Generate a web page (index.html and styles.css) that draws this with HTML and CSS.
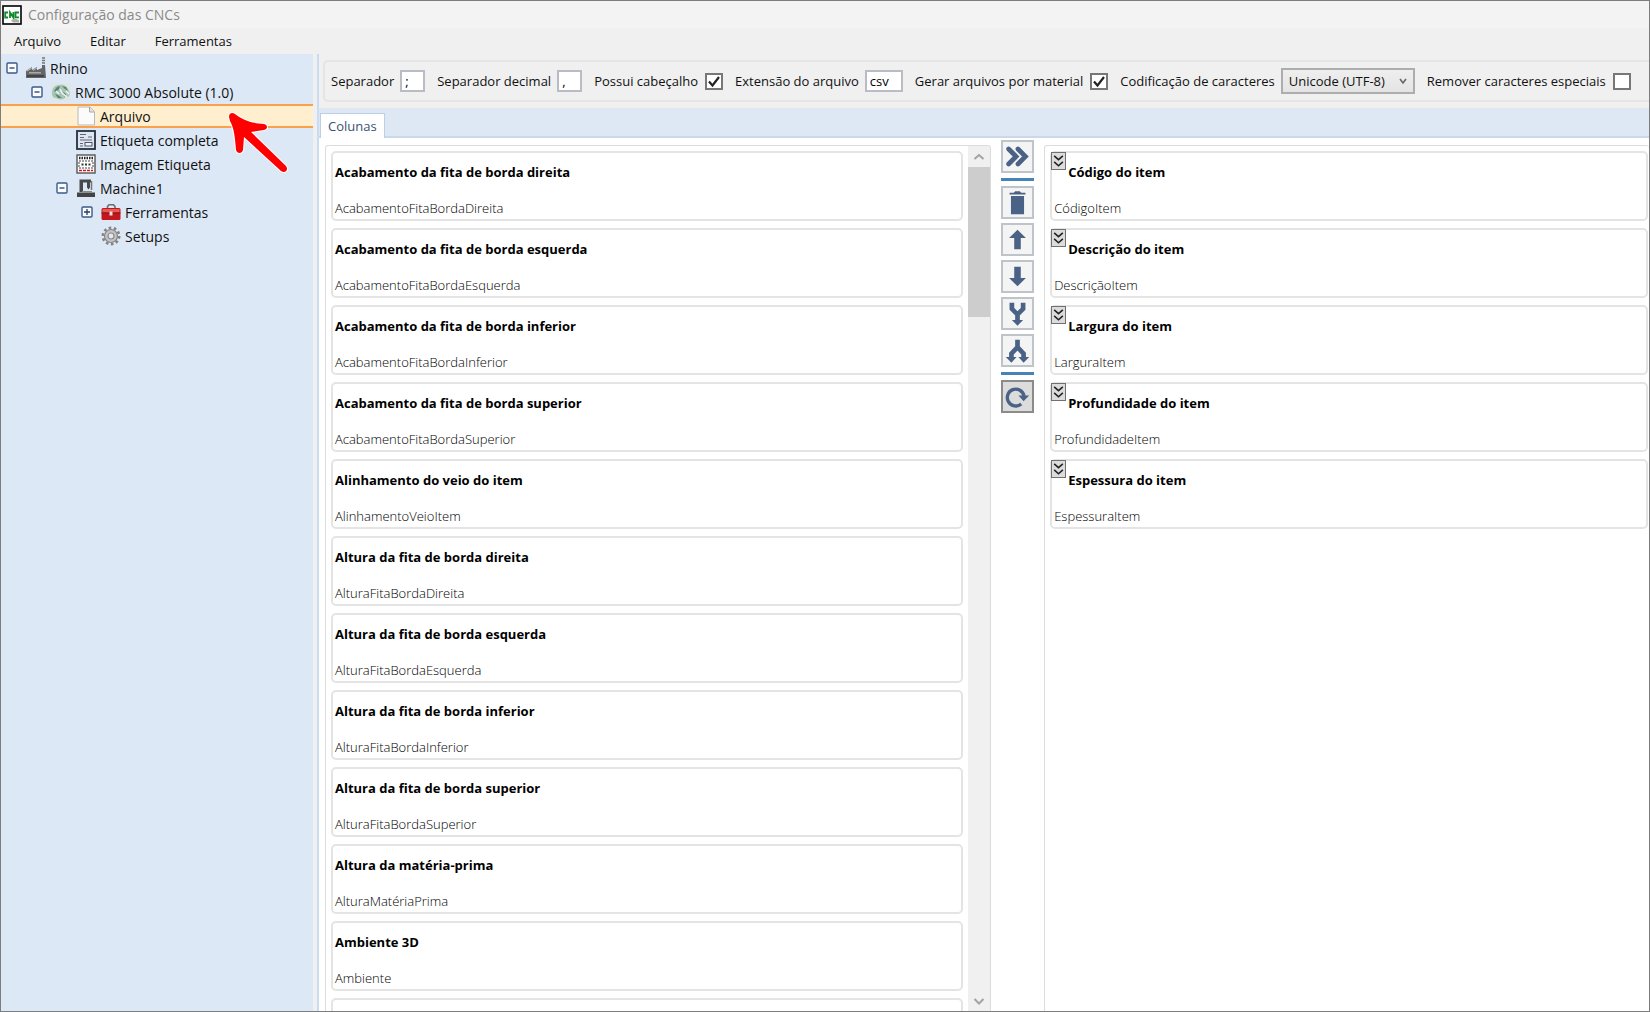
FILE: index.html
```html
<!DOCTYPE html>
<html lang="pt-BR">
<head>
  <meta charset="UTF-8">
  <meta name="viewport" content="width=device-width, initial-scale=1.0">
  <title>Configuração das CNCs</title>
  <link rel="stylesheet" href="styles.css">
</head>
<body>
  <svg class="defs" width="0" height="0" aria-hidden="true">
    <symbol id="minus" viewBox="0 0 12 12"><rect x="1" y="1" width="10" height="10" rx="1" fill="#f8fbff" stroke="#3d5a88" stroke-width="1.4"/><path d="M3.5 6h5" stroke="#253e69" stroke-width="1.3"/></symbol>
    <symbol id="plus" viewBox="0 0 12 12"><rect x="1" y="1" width="10" height="10" rx="1" fill="#f8fbff" stroke="#3d5a88" stroke-width="1.4"/><path d="M3 6h6M6 3v6" stroke="#253e69" stroke-width="1.3"/></symbol>
    <symbol id="expand" viewBox="0 0 15 18"><path d="M2.500 3l5 4.500 5-4.500M2.500 10l5 4.500 5-4.500" fill="none" stroke="#222" stroke-width="1.800"/></symbol>
  </svg>

  <div class="window">
    <header class="titlebar">
      <svg width="20" height="20" viewBox="0 0 20 20">
        <rect x="1" y="1" width="18" height="18" fill="#fff" stroke="#000" stroke-width="1.6"/>
        <path d="M6 7.500H3.200v5H6M8 13V7.500l3.400 5V7M17 7.500h-3.500v4.800H17" fill="none" stroke="#118a2c" stroke-width="1.800"/>
        <path d="M9 15.500c1-1.500 3-1 4-2l4 1.500v2.500h-6z" fill="#a9b3ac"/>
      </svg>
      <h1>Configuração das CNCs</h1>
    </header>

    <nav class="menubar">
      <button type="button">Arquivo</button>
      <button type="button">Editar</button>
      <button type="button">Ferramentas</button>
    </nav>

    <div class="body">
      <aside class="tree">
        <ul>
          <li class="node">
            <button class="toggle" type="button" aria-label="Recolher Rhino"><svg width="12" height="12"><use href="#minus"/></svg></button>
            <svg width="20" height="22" viewBox="0 0 20 22">
              <path d="M0 21v-7l6-4v3l5-3v3l5-2V8h3l1 13z" fill="#666"/>
              <path d="M16 1h3M16 3.500h3M16 6h3" stroke="#777" stroke-width="1.500"/>
              <path d="M1 14l5-3M7 13.500l4-2.500" stroke="#bbb" stroke-width="1"/>
              <path d="M3 15h12v1.500H3z" fill="#aaa"/>
              <path d="M1 19h17" stroke="#444" stroke-width="2"/>
            </svg>
            <span>Rhino</span>
          </li>
          <li class="node depth-1">
            <button class="toggle" type="button" aria-label="Recolher RMC 3000 Absolute"><svg width="12" height="12"><use href="#minus"/></svg></button>
            <svg width="20" height="18" viewBox="0 0 20 18">
              <path d="M0 0h20v18H0z" fill="#dfe6e4"/>
              <path d="M1 10c0-5 3-8 7-8 5-1 9 2 10 6 2 3 0 7-3 6-2 3-7 3-10 1-3 0-4-2-4-5z" fill="#a9c3b7"/>
              <path d="M3 8l3-4 3-1-1 3-3 3zM11 3l4 1 2 4-3-2zM4 11l3 1 4 3-4 0zM12 9l3 2-1 3z" fill="#4f8871"/>
              <path d="M9 6l2 4 5 4M5 8l3 3M15 8l3 3" fill="none" stroke="#f1f7f4" stroke-width="1.400"/>
            </svg>
            <span>RMC 3000 Absolute (1.0)</span>
          </li>
          <li class="node depth-2 selected">
            <span class="toggle"></span>
            <svg width="20" height="20" viewBox="0 0 20 20">
              <path d="M2 1h12l4.500 4.500V19H2z" fill="#fbfbfb" stroke="#b9b9b9"/>
              <path d="M13.500 1v5h5" fill="#e3e3e3" stroke="#a8a8a8"/>
            </svg>
            <span>Arquivo</span>
          </li>
          <li class="node depth-2">
            <span class="toggle"></span>
            <svg width="20" height="20" viewBox="0 0 20 20">
              <rect x="1" y="1" width="18" height="18" fill="#dce5f1" stroke="#26303c" stroke-width="1.800"/>
              <path d="M4 4.500h6M4 7.500h4M12 7h4M4 10h12M4 13.500h3M4 16h3" stroke="#667" stroke-width="1.200"/>
              <rect x="9" y="12.500" width="7" height="3.500" fill="#eef3fa" stroke="#556"/>
            </svg>
            <span>Etiqueta completa</span>
          </li>
          <li class="node depth-2">
            <span class="toggle"></span>
            <svg width="20" height="20" viewBox="0 0 20 20">
              <rect x="1" y="1" width="18" height="18" fill="#fff" stroke="#555" stroke-width="1.400"/>
              <path d="M3 4h14" stroke="#222" stroke-width="2.400" stroke-dasharray="1.500 1"/>
              <rect x="3" y="7" width="14" height="7" fill="#fff" stroke="#444" stroke-dasharray="2 1"/>
              <path d="M5.500 10.500h9" stroke="#333" stroke-width="2" stroke-dasharray="2 1.500"/>
              <path d="M3 16.500h14" stroke="#d8151c" stroke-width="1.600" stroke-dasharray="3 1"/>
            </svg>
            <span>Imagem Etiqueta</span>
          </li>
          <li class="node depth-2">
            <button class="toggle" type="button" aria-label="Recolher Machine1"><svg width="12" height="12"><use href="#minus"/></svg></button>
            <svg width="20" height="20" viewBox="0 0 20 20">
              <path d="M3.500 1.500H15v3h-1v5l-1.500 2L11 9.500v-5H7V14H3.500z" fill="#484848"/>
              <path d="M1 14.500h18v4.500H1z" fill="#444"/>
              <path d="M6 13h10v1.500H6z" fill="#8b8b8b"/>
              <path d="M15.500 3v9" stroke="#777" stroke-width="1.500"/>
            </svg>
            <span>Machine1</span>
          </li>
          <li class="node depth-3">
            <button class="toggle" type="button" aria-label="Expandir Ferramentas"><svg width="12" height="12"><use href="#plus"/></svg></button>
            <svg width="20" height="18" viewBox="0 0 20 18">
              <path d="M6.500 5.500V3.500L8 1.800h4.500l1.500 1.700v2" fill="none" stroke="#6d6d6d" stroke-width="1.600"/>
              <rect x="0.500" y="5" width="19" height="12" rx="1.500" fill="#c2181d"/>
              <path d="M1.500 6h17v3.500h-17z" fill="#e35a57"/>
              <path d="M0.500 10h19" stroke="#8c0f12"/>
              <path d="M8.500 8.500h3v4h-3z" fill="#f1dcdc"/>
            </svg>
            <span>Ferramentas</span>
          </li>
          <li class="node depth-3">
            <span class="toggle"></span>
            <svg width="20" height="20" viewBox="0 0 20 20">
              <circle cx="10" cy="10" r="8.200" fill="none" stroke="#838383" stroke-width="2.600" stroke-dasharray="2.600 2.550"/>
              <circle cx="10" cy="10" r="6.500" fill="#c3c3c3" stroke="#868686" stroke-width="1.200"/>
              <circle cx="10" cy="10" r="3" fill="#dfe8f5" stroke="#8b8b8b" stroke-width="1.200"/>
            </svg>
            <span>Setups</span>
          </li>
        </ul>

        <svg class="pointer" width="64" height="64" viewBox="0 0 64 64" aria-hidden="true">
          <path d="M5 8c0-4 3-5 6-3 8 6 15 9 29 10 4 1 4 5 0 6l-13 2 35 34c3 4-1 8-5 5L20 28l-1 13c-1 4-6 4-7 0-1-13-2-22-6-29z" fill="#fe0000" stroke="#fff" stroke-width="2" paint-order="stroke"/>
        </svg>
      </aside>

      <main class="content">
        <form class="options">
          <label for="sep">Separador</label>
          <input class="field" type="text" id="sep" value=";">
          <label for="dec">Separador decimal</label>
          <input class="field" type="text" id="dec" value=",">
          <label for="header">Possui cabeçalho</label>
          <input class="check" type="checkbox" id="header" checked>
          <label for="ext">Extensão do arquivo</label>
          <input class="field wide" type="text" id="ext" value="csv">
          <label for="material">Gerar arquivos por material</label>
          <input class="check" type="checkbox" id="material" checked>
          <label for="encoding">Codificação de caracteres</label>
          <select id="encoding"><option>Unicode (UTF-8)</option></select>
          <label for="special">Remover caracteres especiais</label>
          <input class="check" type="checkbox" id="special">
        </form>

        <div class="tabs">
          <button class="tab" type="button">Colunas</button>
        </div>

        <div class="columns">
          <section class="panel available">
            <ul class="cards" id="available"></ul>
            <div class="scrollbar">
              <svg width="22" height="21" viewBox="0 0 22 21"><path d="M6.500 13l4.500-4 4.500 4" fill="none" stroke="#a3a3a3" stroke-width="2"/></svg>
              <div class="thumb"></div>
              <svg width="22" height="21" viewBox="0 0 22 21"><path d="M6.500 9l4.500 4.500L15.500 9" fill="none" stroke="#a3a3a3" stroke-width="2"/></svg>
            </div>
          </section>

          <div class="actions">
            <button type="button" aria-label="Adicionar"><svg viewBox="0 0 31 31"><path d="M6 7.500l8 8-8 8M16 7.500l8 8-8 8" fill="none" stroke="#4a6285" stroke-width="5" stroke-linecap="round"/></svg></button>
            <hr>
            <button type="button" aria-label="Excluir"><svg viewBox="0 0 31 31"><path d="M7 5h4.500l1.500-1.500h5L19.500 5H24v2H7zM8.500 8.500h14V28h-14z" fill="#4a6285"/></svg></button>
            <button type="button" aria-label="Mover para cima"><svg viewBox="0 0 31 31"><path d="M15.500 5l9 9h-5.500v12h-7V14H6.500z" fill="#4a6285"/></svg></button>
            <button type="button" aria-label="Mover para baixo"><svg viewBox="0 0 31 31"><path d="M15.500 26l9-9h-5.500V5h-7v12H6.500z" fill="#4a6285"/></svg></button>
            <button type="button" aria-label="Unir"><svg viewBox="0 0 31 31"><path d="M9.500 4v6.500l6 6 6-6V4M15.500 15v8" fill="none" stroke="#4a6285" stroke-width="5"/><path d="M9.500 22.500h12l-6 6z" fill="#4a6285"/></svg></button>
            <button type="button" aria-label="Separar"><svg viewBox="0 0 31 31"><path d="M15.500 4v8M9 25v-6l6.500-7 6.500 7v6" fill="none" stroke="#4a6285" stroke-width="5"/><path d="M3 22.500h11.500L9 28.500zM16.500 22.500H28l-6 6z" fill="#4a6285"/></svg></button>
            <hr>
            <button class="reset" type="button" aria-label="Restaurar"><svg viewBox="0 0 31 31"><path d="M19.500 23.500A9 9 0 1 1 22.500 15" fill="none" stroke="#4a6285" stroke-width="3.600"/><path d="M16.500 14.500H28l-6 6z" fill="#4a6285"/></svg></button>
          </div>

          <section class="panel chosen">
            <ul class="cards" id="chosen"></ul>
          </section>
        </div>
      </main>
    </div>
  </div>

  <script>
    const available = [
      ["Acabamento da fita de borda direita", "AcabamentoFitaBordaDireita"],
      ["Acabamento da fita de borda esquerda", "AcabamentoFitaBordaEsquerda"],
      ["Acabamento da fita de borda inferior", "AcabamentoFitaBordaInferior"],
      ["Acabamento da fita de borda superior", "AcabamentoFitaBordaSuperior"],
      ["Alinhamento do veio do item", "AlinhamentoVeioItem"],
      ["Altura da fita de borda direita", "AlturaFitaBordaDireita"],
      ["Altura da fita de borda esquerda", "AlturaFitaBordaEsquerda"],
      ["Altura da fita de borda inferior", "AlturaFitaBordaInferior"],
      ["Altura da fita de borda superior", "AlturaFitaBordaSuperior"],
      ["Altura da matéria-prima", "AlturaMatériaPrima"],
      ["Ambiente 3D", "Ambiente"],
      ["", ""]
    ];
    const chosen = [
      ["Código do item", "CódigoItem"],
      ["Descrição do item", "DescriçãoItem"],
      ["Largura do item", "LarguraItem"],
      ["Profundidade do item", "ProfundidadeItem"],
      ["Espessura do item", "EspessuraItem"]
    ];
    const expandBtn = '<button class="expand" type="button" aria-label="Detalhes"><svg width="15" height="18"><use href="#expand"/></svg></button>';

    function fill(id, items, button) {
      document.getElementById(id).innerHTML = items.map(([title, field]) =>
        `<li class="card">${button}<h2>${title}</h2><p>${field}</p></li>`
      ).join('');
    }
    fill('available', available, '');
    fill('chosen', chosen, expandBtn);
  </script>
</body>
</html>
```
FILE: styles.css
```css
* { box-sizing: border-box; }
body { margin: 0; font-family: "Open Sans", "Noto Sans", sans-serif; font-size: 13px; color: #111; }
ul { list-style: none; margin: 0; padding: 0; }
button { padding: 0; border: none; background: none; font: inherit; color: inherit; }
.defs { position: absolute; }

.window { height: 100vh; display: flex; flex-direction: column; border: 1px solid #7d7d7d; background: #f0f0f0; overflow: hidden; }
.titlebar { display: flex; align-items: center; gap: 6px; height: 27px; padding: 0 1px; background: #f3f3f3; flex: none; }
.titlebar h1 { margin: 0; font-size: 14px; font-weight: 400; color: #8a8a8a; }
.menubar { display: flex; gap: 29px; height: 26px; padding: 0 13px; flex: none; }

.body { flex: 1; display: flex; min-height: 0; }

/* árvore */
.tree { position: relative; width: 312px; flex: none; padding-top: 2px; background: #dde8f6; font-size: 14px; }
.node { display: flex; align-items: center; height: 24px; padding-left: 5px; white-space: nowrap; }
.node > svg { flex: none; margin-right: 4px; }
.depth-1 { padding-left: 30px; }
.depth-2 { padding-left: 55px; }
.depth-3 { padding-left: 80px; }
.selected { background: #ffefcf; border-top: 2px solid #fba04c; border-bottom: 2px solid #fba04c; }
.toggle { width: 12px; height: 12px; margin-right: 8px; flex: none; display: block; }
.toggle svg { display: block; }
.pointer { position: absolute; left: 223px; top: 55px; }

/* opções do arquivo */
.content { flex: 1; min-width: 0; margin-left: 4px; display: flex; flex-direction: column; border-left: 2px solid #c9dcf3; }
.options { display: flex; align-items: center; height: 42px; margin: 6px 0 6px 4px; padding-left: 6px; border: 2px solid #e5e5e5; border-right: none; border-radius: 5px 0 0 5px; white-space: nowrap; flex: none; }
.options label { margin-right: 6px; }
.field { width: 25px; height: 22px; margin: 0 12px 0 0; padding: 0 3px; border: 2px solid #b9bcc4; background: #fff; font: inherit; }
.wide { width: 38px; }
.check { appearance: none; width: 18px; height: 17px; margin: 0 12px 0 1px; border: 2px solid #777; background: #fff; flex: none; }
.check:checked { background: #fff url("data:image/svg+xml,%3Csvg xmlns='http://www.w3.org/2000/svg' viewBox='0 0 14 13'%3E%3Cpath d='M2 6.500l3.500 4L12 2' fill='none' stroke='%23222' stroke-width='2.200'/%3E%3C/svg%3E") center / 14px 13px no-repeat; }
.options select { appearance: none; width: 134px; height: 26px; margin-right: 12px; padding: 0 6px; border: 2px solid #adadad; border-radius: 0; font: inherit; color: inherit; background: url("data:image/svg+xml,%3Csvg xmlns='http://www.w3.org/2000/svg' viewBox='0 0 8 8'%3E%3Cpath d='M1 2l3 4 3-4' fill='none' stroke='%23666' stroke-width='1.600'/%3E%3C/svg%3E") right 6px center / 8px 8px no-repeat, linear-gradient(#efefef, #e4e4e4); }

.tabs { display: flex; align-items: flex-end; height: 30px; padding-left: 1px; background: #dde8f4; border-bottom: 2px solid #cbd8ea; flex: none; }
.tab { height: 25px; margin-bottom: -2px; padding: 0 7px; background: #fff; border: 1px solid #bccfe6; border-bottom: none; color: #3b5273; }

/* colunas */
.columns { flex: 1; display: flex; min-height: 0; background: #fff; padding-left: 6px; }
.panel { margin-top: 7px; border: 1px solid #dcdcdc; border-bottom: none; border-radius: 3px 3px 0 0; display: flex; overflow: hidden; }
.available { flex: 11 1 0; }
.chosen { flex: 10 1 0; border-right: none; }
.cards { flex: 1; min-width: 0; padding: 5px; }
.chosen .cards { padding-right: 1px; }
.card { height: 70px; margin-bottom: 7px; border: 2px solid #e4e4e4; border-radius: 5px; padding: 0 2px; }
.card h2 { margin: 0; font-size: 13px; font-weight: 700; line-height: 38px; min-height: 38px; color: #000; }
.card p { margin: 7px 0 0; line-height: 21px; font-weight: 300; color: #000; }
.expand { float: left; width: 15px; height: 18px; margin: -1px 2px 0 -3px; background: #dcdcdc; border: 1px solid #707070; display: flex; align-items: center; justify-content: center; }

.scrollbar { width: 22px; flex: none; display: flex; flex-direction: column; background: #f0f0f0; }
.scrollbar svg { display: block; flex: none; }
.scrollbar svg:last-child { margin-top: auto; }
.thumb { height: 150px; background: #cdcdcd; }

.actions { display: flex; flex-direction: column; gap: 4px; width: 33px; margin: 2px 10px 0; flex: none; }
.actions button { height: 33px; border: 2px solid #bfc3ca; background: #f4f4f4; }
.actions svg { display: block; width: 29px; height: 29px; }
.actions hr { width: 100%; height: 3px; margin: 1px 0; border: none; background: #4684b8; }
.actions .reset { background: #dcdcdc; border-color: #8b8b8b; }
```
